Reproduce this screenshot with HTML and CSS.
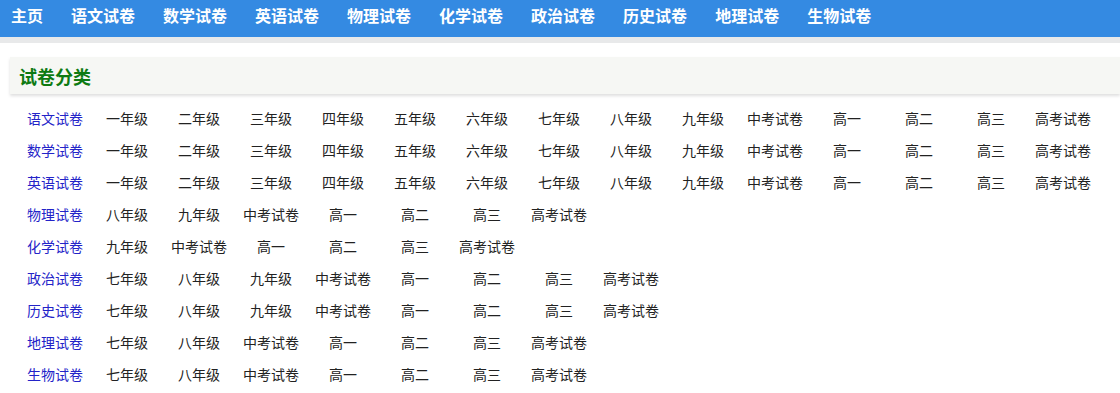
FILE: index.html
```html
<!DOCTYPE html>
<html lang="zh-CN">
<head>
<meta charset="utf-8">
<title>试卷分类</title>
<link rel="stylesheet" href="styles.css">
</head>
<body>
<nav class="nav">
  <a class="nav-item" href="#">主页</a>
  <a class="nav-item" href="#">语文试卷</a>
  <a class="nav-item" href="#">数学试卷</a>
  <a class="nav-item" href="#">英语试卷</a>
  <a class="nav-item" href="#">物理试卷</a>
  <a class="nav-item" href="#">化学试卷</a>
  <a class="nav-item" href="#">政治试卷</a>
  <a class="nav-item" href="#">历史试卷</a>
  <a class="nav-item" href="#">地理试卷</a>
  <a class="nav-item" href="#">生物试卷</a>
</nav>
<div class="strip"></div>
<main class="main">
  <div class="title-box"><h2 class="title">试卷分类</h2></div>
  <div class="rows">
    <div class="row"><a class="cat" href="#">语文试卷</a><a class="cell" href="#">一年级</a><a class="cell" href="#">二年级</a><a class="cell" href="#">三年级</a><a class="cell" href="#">四年级</a><a class="cell" href="#">五年级</a><a class="cell" href="#">六年级</a><a class="cell" href="#">七年级</a><a class="cell" href="#">八年级</a><a class="cell" href="#">九年级</a><a class="cell" href="#">中考试卷</a><a class="cell" href="#">高一</a><a class="cell" href="#">高二</a><a class="cell" href="#">高三</a><a class="cell" href="#">高考试卷</a></div>
    <div class="row"><a class="cat" href="#">数学试卷</a><a class="cell" href="#">一年级</a><a class="cell" href="#">二年级</a><a class="cell" href="#">三年级</a><a class="cell" href="#">四年级</a><a class="cell" href="#">五年级</a><a class="cell" href="#">六年级</a><a class="cell" href="#">七年级</a><a class="cell" href="#">八年级</a><a class="cell" href="#">九年级</a><a class="cell" href="#">中考试卷</a><a class="cell" href="#">高一</a><a class="cell" href="#">高二</a><a class="cell" href="#">高三</a><a class="cell" href="#">高考试卷</a></div>
    <div class="row"><a class="cat" href="#">英语试卷</a><a class="cell" href="#">一年级</a><a class="cell" href="#">二年级</a><a class="cell" href="#">三年级</a><a class="cell" href="#">四年级</a><a class="cell" href="#">五年级</a><a class="cell" href="#">六年级</a><a class="cell" href="#">七年级</a><a class="cell" href="#">八年级</a><a class="cell" href="#">九年级</a><a class="cell" href="#">中考试卷</a><a class="cell" href="#">高一</a><a class="cell" href="#">高二</a><a class="cell" href="#">高三</a><a class="cell" href="#">高考试卷</a></div>
    <div class="row"><a class="cat" href="#">物理试卷</a><a class="cell" href="#">八年级</a><a class="cell" href="#">九年级</a><a class="cell" href="#">中考试卷</a><a class="cell" href="#">高一</a><a class="cell" href="#">高二</a><a class="cell" href="#">高三</a><a class="cell" href="#">高考试卷</a></div>
    <div class="row"><a class="cat" href="#">化学试卷</a><a class="cell" href="#">九年级</a><a class="cell" href="#">中考试卷</a><a class="cell" href="#">高一</a><a class="cell" href="#">高二</a><a class="cell" href="#">高三</a><a class="cell" href="#">高考试卷</a></div>
    <div class="row"><a class="cat" href="#">政治试卷</a><a class="cell" href="#">七年级</a><a class="cell" href="#">八年级</a><a class="cell" href="#">九年级</a><a class="cell" href="#">中考试卷</a><a class="cell" href="#">高一</a><a class="cell" href="#">高二</a><a class="cell" href="#">高三</a><a class="cell" href="#">高考试卷</a></div>
    <div class="row"><a class="cat" href="#">历史试卷</a><a class="cell" href="#">七年级</a><a class="cell" href="#">八年级</a><a class="cell" href="#">九年级</a><a class="cell" href="#">中考试卷</a><a class="cell" href="#">高一</a><a class="cell" href="#">高二</a><a class="cell" href="#">高三</a><a class="cell" href="#">高考试卷</a></div>
    <div class="row"><a class="cat" href="#">地理试卷</a><a class="cell" href="#">七年级</a><a class="cell" href="#">八年级</a><a class="cell" href="#">中考试卷</a><a class="cell" href="#">高一</a><a class="cell" href="#">高二</a><a class="cell" href="#">高三</a><a class="cell" href="#">高考试卷</a></div>
    <div class="row"><a class="cat" href="#">生物试卷</a><a class="cell" href="#">七年级</a><a class="cell" href="#">八年级</a><a class="cell" href="#">中考试卷</a><a class="cell" href="#">高一</a><a class="cell" href="#">高二</a><a class="cell" href="#">高三</a><a class="cell" href="#">高考试卷</a></div>
  </div>
</main>
</body>
</html>
```
FILE: styles.css
```css
html, body {
  margin: 0;
  padding: 0;
  background: #ffffff;
  font-family: "Noto Sans CJK SC", "Noto Sans", sans-serif;
}

.nav {
  display: flex;
  gap: 28px;
  height: 37px;
  padding: 0 0 0 11px;
  background: #348ae2;
  box-sizing: border-box;
}

.nav-item {
  color: #ffffff;
  font-size: 16px;
  font-weight: bold;
  line-height: 30px;
  text-decoration: none;
}

.strip {
  height: 6px;
  background: #e8e9ea;
}

.main {
  padding: 14px 0 0 10px;
}

.title-box {
  height: 37px;
  background: #f6f7f4;
  box-shadow: 0 2px 3px rgba(0, 0, 0, 0.13);
  display: flex;
  align-items: center;
  padding-left: 9px;
}

.title {
  margin: 0;
  font-size: 18px;
  font-weight: bold;
  color: #0d7a12;
  line-height: 1;
}

.rows {
  padding: 8px 0 0 9px;
}

.row {
  display: flex;
  height: 32px;
  line-height: 32px;
  font-size: 14px;
}

.cat, .cell {
  width: 72px;
  flex: none;
  text-align: center;
  text-decoration: none;
}

.cat {
  color: #2323c8;
}

.cell {
  color: #222222;
}
```
